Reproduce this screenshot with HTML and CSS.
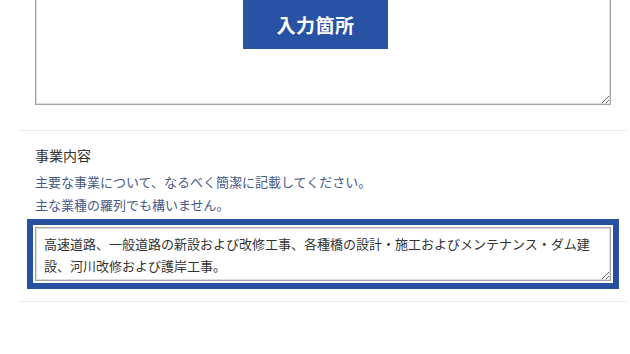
FILE: index.html
```html
<!DOCTYPE html>
<html lang="ja">
<head>
<meta charset="utf-8">
<link rel="stylesheet" href="styles.css">
</head>
<body>
<div class="form">
  <div class="section first">
    <textarea class="field tall" aria-label="入力箇所"></textarea>
    <div class="badge">入力箇所</div>
  </div>
  <div class="section">
    <div class="label">事業内容</div>
    <p class="help">主要な事業について、なるべく簡潔に記載してください。<br>主な業種の羅列でも構いません。</p>
    <textarea class="field highlighted">高速道路、一般道路の新設および改修工事、各種橋の設計・施工およびメンテナンス・ダム建設、河川改修および護岸工事。</textarea>
  </div>
</div>
</body>
</html>
```
FILE: styles.css
```css
html, body {
  margin: 0;
  padding: 0;
  background: #ffffff;
  overflow: hidden;
}
body {
  font-family: "Noto Sans CJK JP", "Noto Sans", sans-serif;
  color: #333333;
}
.form {
  width: 609px;
  margin: -40px 0 0 18px;
}
.section {
  position: relative;
  padding: 12px 16px 20px 17px;
  border-bottom: 1px solid #ececec;
}
.section.first {
  padding-top: 0;
  padding-bottom: 25px;
}
.field {
  display: block;
  box-sizing: border-box;
  width: 576px;
  margin: 0;
  border: 1px solid #a3a3a3;
  box-shadow: inset 0 0 0 1px #dcdcdc;
  background: #ffffff;
  font-family: "Noto Sans CJK JP", "Noto Sans", sans-serif;
  color: #333333;
}
.tall {
  height: 145px;
}
.badge {
  position: absolute;
  top: 40px;
  left: 225px;
  width: 145px;
  height: 49px;
  background: #2852a3;
  color: #ffffff;
  font-size: 19px;
  font-weight: 700;
  display: flex;
  align-items: center;
  justify-content: center;
  letter-spacing: 0.5px;
}
.label {
  font-size: 14px;
  line-height: 24px;
  margin-bottom: 3px;
  color: #333333;
}
.help {
  margin: 0 0 11px 0;
  font-size: 13px;
  line-height: 23px;
  color: #475a86;
}
.highlighted {
  height: 54px;
  padding: 5px 12px 4px 8px;
  font-size: 13px;
  line-height: 22px;
  outline: 6px solid #2850a0;
  outline-offset: 2px;
}
```
